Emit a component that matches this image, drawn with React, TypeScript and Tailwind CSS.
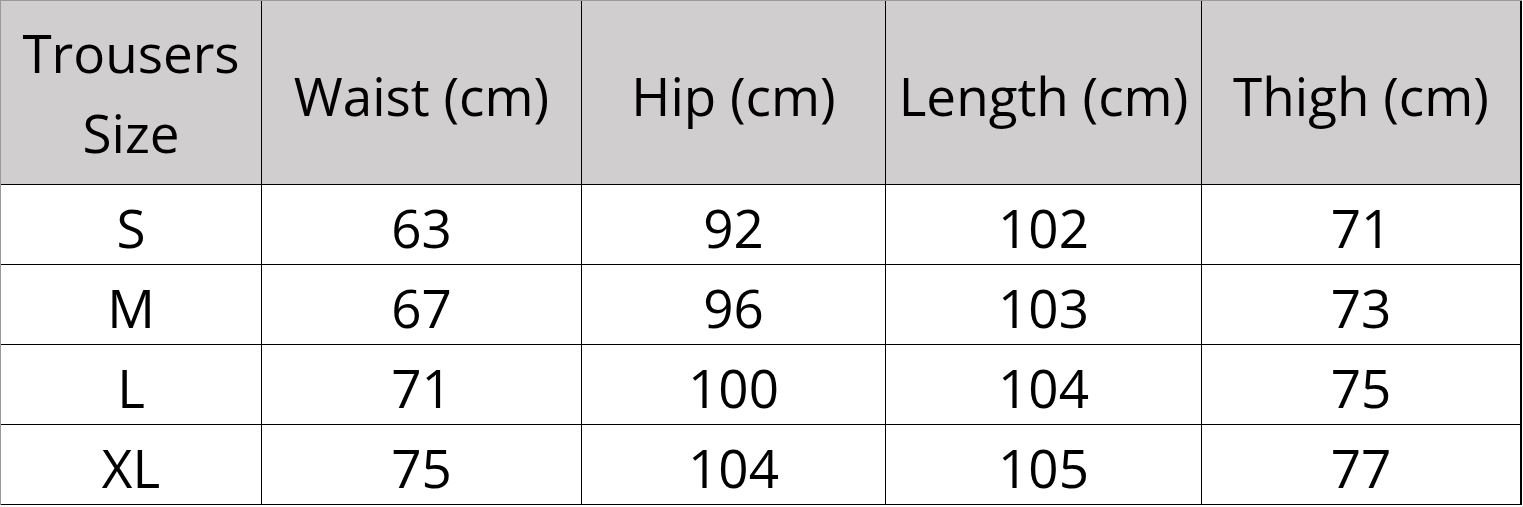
const columns = ['Waist (cm)', 'Hip (cm)', 'Length (cm)', 'Thigh (cm)'];

const rows = [
  { size: 'S', values: [63, 92, 102, 71] },
  { size: 'M', values: [67, 96, 103, 73] },
  { size: 'L', values: [71, 100, 104, 75] },
  { size: 'XL', values: [75, 104, 105, 77] },
];

const grid = 'grid grid-cols-[261px_320px_304px_316px_320px]';

export default function App() {
  return (
    <div className="w-[1523px] h-[507px] bg-white font-['Open_Sans',sans-serif] text-black">
      <div className="w-[1522px] border-l border-t border-[#9a9a9a]">
        <div className={`${grid} grid-rows-[184px] bg-[#d0cece]`}>
          <div className="flex items-center justify-center border-r border-b border-black text-center text-[53px] leading-[80px]">
            Trousers
            <br />
            Size
          </div>
          {columns.map((col, i) => (
            <div
              key={col}
              className={`flex items-center justify-center border-b border-black text-[53px] leading-none pt-[6px] ${i === columns.length - 1 ? 'border-r-2' : 'border-r'}`}
            >
              {col}
            </div>
          ))}
        </div>

        {rows.map((row) => (
          <div key={row.size} className={`${grid} grid-rows-[80px]`}>
            <div className="flex items-center justify-center border-r border-b border-black text-[53px] leading-none pt-[6px]">
              {row.size}
            </div>
            {row.values.map((v, i) => (
              <div
                key={i}
                className={`flex items-center justify-center border-b border-black text-[53px] leading-none pt-[6px] ${i === row.values.length - 1 ? 'border-r-2' : 'border-r'}`}
              >
                {v}
              </div>
            ))}
          </div>
        ))}
      </div>
    </div>
  );
}
